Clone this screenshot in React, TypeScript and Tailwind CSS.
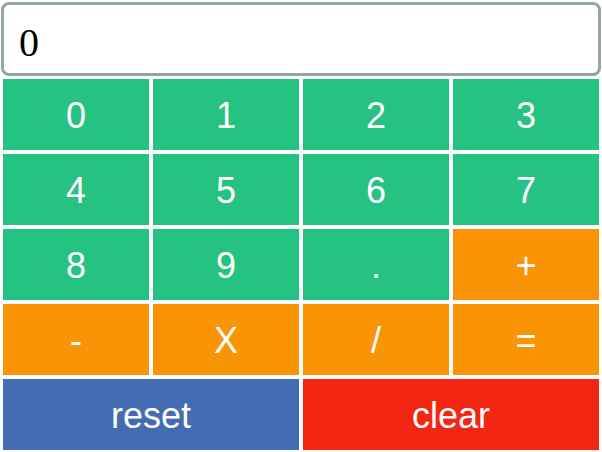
import React from "react";

const GREEN = "bg-[#26c281]";
const ORANGE = "bg-[#f89406]";

type Key = { label: string; color: string; span?: boolean };

const keys: Key[] = [
  { label: "0", color: GREEN },
  { label: "1", color: GREEN },
  { label: "2", color: GREEN },
  { label: "3", color: GREEN },
  { label: "4", color: GREEN },
  { label: "5", color: GREEN },
  { label: "6", color: GREEN },
  { label: "7", color: GREEN },
  { label: "8", color: GREEN },
  { label: "9", color: GREEN },
  { label: ".", color: GREEN },
  { label: "+", color: ORANGE },
  { label: "-", color: ORANGE },
  { label: "X", color: ORANGE },
  { label: "/", color: ORANGE },
  { label: "=", color: ORANGE },
  { label: "reset", color: "bg-[#446cb3]", span: true },
  { label: "clear", color: "bg-[#f22613]", span: true },
];

export default function App() {
  return (
    <div className="w-[602px] h-[452px] bg-white overflow-hidden">
      <div className="px-[1px] pt-[2px]">
        <input
          readOnly
          value="0"
          className="block w-full h-[74px] border-[3px] border-[#95a5a6] rounded-[8px] bg-white pl-[15px] pt-[6px] text-[40px] text-black outline-none"
          style={{ fontFamily: '"Liberation Serif", "Times New Roman", serif' }}
        />
      </div>
      <div
        className="grid grid-cols-4 pl-[1px] pt-[1px] w-[601px]"
        style={{ fontFamily: '"Liberation Sans", Arial, sans-serif' }}
      >
        {keys.map((k) => (
          <button
            key={k.label}
            className={`${k.color} ${k.span ? "col-span-2" : ""} h-[75px] border-2 border-white text-white text-[36px] leading-none pt-[3px] flex items-center justify-center`}
          >
            {k.label}
          </button>
        ))}
      </div>
    </div>
  );
}
